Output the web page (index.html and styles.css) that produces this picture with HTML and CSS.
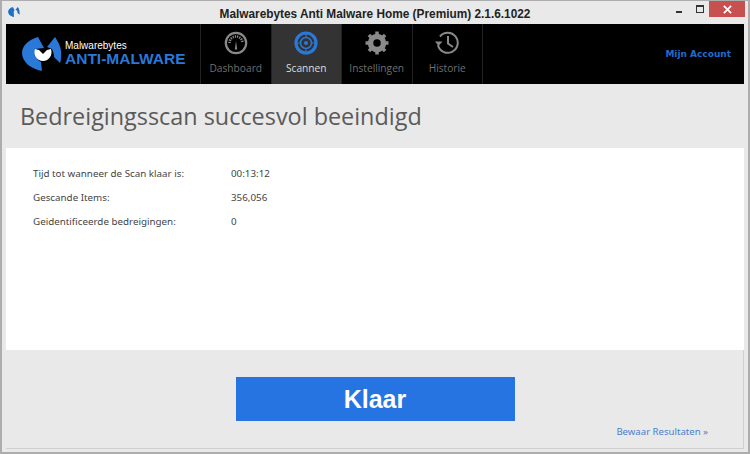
FILE: index.html
```html
<!DOCTYPE html>
<html lang="nl">
<head>
  <meta charset="UTF-8" />
  <meta name="viewport" content="width=device-width, initial-scale=1.0" />
  <title>Malwarebytes Anti Malware Home (Premium) 2.1.6.1022</title>
  <link rel="stylesheet" href="styles.css">
</head>
<body>
<div class="window">
  <div class="titlebar">
    <svg class="app-icon" width="12" height="10" viewBox="0 0 40 34">
      <path d="M16 0C6 3 0 9 0 16C0 25 9 32 20 34L19 15L22 11Z" fill="#1e6fc8"/>
      <path d="M33 0C37 6 40 12 39 26L32 20C32 17 31 14 30 12L25 9Z" fill="#1e6fc8"/>
    </svg>
    <div class="title">Malwarebytes Anti Malware Home (Premium) 2.1.6.1022</div>
    <div class="win-buttons">
      <span class="btn-min"></span>
      <span class="btn-max"></span>
      <span class="btn-close">
        <svg width="9" height="9" viewBox="0 0 10 10"><path d="M1 1L9 9M9 1L1 9" stroke="#fff" stroke-width="2"/></svg>
      </span>
    </div>
  </div>

  <div class="header">
    <div class="logo">
      <svg class="logo-mark" width="40" height="34" viewBox="0 0 40 34">
        <path d="M16 0C6 3 0 9 0 16C0 25 9 32 20 34L19 25C15 23 13 19 13 15L13 12L22 11Z" fill="#2a78d8"/>
        <path d="M33 0C37 6 40 12 39 19C39 21 39 24 38 26L32 20C32 17 31 14 30 12L25 10Z" fill="#2a78d8"/>
        <path d="M13 12L17 13L21 17L25 13L29 12C31 18 27 24 21 24C15 24 11 18 13 12Z" fill="#fff"/>
      </svg>
      <div class="logo-text">
        <div class="logo-top">Malwarebytes</div>
        <div class="logo-main">ANTI-MALWARE</div>
      </div>
    </div>
    <div class="nav">
      <div class="nav-item">
        <svg class="nav-icon" viewBox="0 0 24 24" width="24" height="24" fill="none">
          <circle cx="12" cy="12" r="10.2" stroke="#8a8a8a" stroke-width="2.200"/>
          <path d="M5.500 12A6.500 6.500 0 0 1 18.500 12" stroke="#8a8a8a" stroke-width="2.500" stroke-dasharray="1.200 1"/>
          <path d="M10.800 18.500L12 10L13.200 18.500Z" fill="#8a8a8a"/>
        </svg>
        <div class="nav-label">Dashboard</div>
      </div>
      <div class="nav-item active">
        <svg class="nav-icon" viewBox="0 0 24 24" width="24" height="24" fill="none">
          <circle cx="12" cy="12" r="10" stroke="#2a78d8" stroke-width="3.200"/>
          <circle cx="12" cy="12" r="5.500" stroke="#2a78d8" stroke-width="1.500"/>
          <circle cx="12" cy="12" r="2" fill="#2a78d8"/>
          <path d="M12 3V6M12 18V21M3 12H6M18 12H21" stroke="#2a78d8" stroke-width="1"/>
        </svg>
        <div class="nav-label">Scannen</div>
      </div>
      <div class="nav-item">
        <svg class="nav-icon" viewBox="0 0 24 24" width="24" height="24" fill="none">
          <circle cx="12" cy="12" r="6.500" stroke="#8a8a8a" stroke-width="5.500"/>
          <path d="M12 0.500V23.500M0.500 12H23.500M3.900 3.900L20.100 20.100M20.100 3.900L3.900 20.100" stroke="#8a8a8a" stroke-width="3.500" stroke-dasharray="3.500 16.500 3.500"/>
        </svg>
        <div class="nav-label">Instellingen</div>
      </div>
      <div class="nav-item">
        <svg class="nav-icon" viewBox="0 0 24 24" width="24" height="24" fill="none">
          <path d="M3 14A10 10 0 1 0 5 5.500" stroke="#8a8a8a" stroke-width="2"/>
          <path d="M0 10.500L3.500 15L7.500 10.500Z" fill="#8a8a8a"/>
          <path d="M13 5V12.500L18 16" stroke="#8a8a8a" stroke-width="2"/>
        </svg>
        <div class="nav-label">Historie</div>
      </div>
    </div>
    <div class="account">Mijn Account</div>
  </div>

  <h1 class="heading">Bedreigingsscan succesvol beeindigd</h1>

  <div class="results">
    <div class="row"><span class="row-label">Tijd tot wanneer de Scan klaar is:</span><span>00:13:12</span></div>
    <div class="row"><span class="row-label">Gescande Items:</span><span>356,056</span></div>
    <div class="row"><span class="row-label">Geidentificeerde bedreigingen:</span><span>0</span></div>
  </div>

  <div class="footer">
    <button class="done">Klaar</button>
    <a class="save">Bewaar Resultaten »</a>
  </div>
</div>
</body>
</html>
```

FILE: styles.css
```css
html, body {
  margin: 0;
  height: 100%;
}
body {
  font-family: 'Noto Sans', sans-serif;
  background: #e9e9e9;
  overflow: hidden;
}
.window {
  box-sizing: border-box;
  height: 454px;
  display: flex;
  flex-direction: column;
  padding: 0 4px 3px;
  border: 2px solid #adadad;
  border-top-width: 1px;
  background: #e9e9e9;
}
.titlebar {
  height: 23px;
  display: flex;
  align-items: center;
  justify-content: center;
  position: relative;
  margin: 0 -4px;
  flex-shrink: 0;
}
.app-icon {
  position: absolute;
  left: 6px;
  top: 6px;
}
.title {
  font-family: 'Liberation Sans', sans-serif;
  font-size: 11.850px;
  font-weight: bold;
  color: #222;
  padding-top: 2px;
}
.win-buttons {
  position: absolute;
  right: 3px;
  top: 0;
  display: flex;
  align-items: flex-start;
}
.btn-min {
  width: 6px;
  height: 2px;
  background: #333;
  margin: 10px 14px 0 0;
}
.btn-max {
  box-sizing: border-box;
  width: 8px;
  height: 8px;
  border: 1px solid #333;
  border-top-width: 2px;
  margin: 4px 5px 0 0;
}
.btn-close {
  width: 36px;
  height: 16px;
  background: #c75050;
  display: flex;
  align-items: center;
  justify-content: center;
}
.header {
  height: 60px;
  background: #000;
  display: flex;
  align-items: stretch;
  flex-shrink: 0;
}
.logo {
  width: 195px;
  display: flex;
  align-items: center;
  padding: 0 0 1px 16px;
  box-sizing: border-box;
  gap: 3px;
  border-right: 1px solid #222;
}
.logo-mark {
  display: block;
}
.logo-top {
  font-family: 'Liberation Sans', sans-serif;
  font-size: 10px;
  color: #fff;
  line-height: 10px;
}
.logo-main {
  font-family: 'Liberation Sans', sans-serif;
  font-size: 15.500px;
  font-weight: bold;
  color: #2a78d8;
  line-height: 16px;
}
.nav {
  display: flex;
}
.nav-item {
  width: 70.500px;
  border-right: 1px solid #222;
  display: flex;
  flex-direction: column;
  align-items: center;
  padding-top: 7px;
  box-sizing: border-box;
}
.nav-item.active {
  background: #333;
}
.nav-icon {
  display: block;
}
.nav-label {
  font-family: 'Open Sans', sans-serif;
  font-size: 10.200px;
  color: #6f6f6f;
  margin-top: 6px;
}
.active .nav-label {
  color: #ddd;
}
.account {
  margin-left: auto;
  align-self: center;
  font-family: 'DejaVu Sans', sans-serif;
  font-size: 9px;
  font-weight: bold;
  color: #1f6ccc;
  padding-right: 13px;
}
.heading {
  height: 64px;
  margin: 0;
  padding-left: 14px;
  display: flex;
  align-items: center;
  font-family: 'Open Sans', sans-serif;
  font-size: 23.400px;
  font-weight: 400;
  color: #5a5a5a;
  flex-shrink: 0;
}
.results {
  height: 202px;
  box-sizing: border-box;
  background: #fff;
  padding: 18px 27px;
  display: flex;
  flex-direction: column;
  gap: 8px;
  flex-shrink: 0;
}
.row {
  display: flex;
  font-family: 'Noto Sans', sans-serif;
  font-size: 9.800px;
  color: #444;
  line-height: 16px;
}
.row-label {
  width: 198px;
}
.footer {
  flex: 1;
  position: relative;
  display: flex;
  justify-content: center;
  align-items: flex-start;
  padding-top: 27px;
  border-right: 1px solid #cfcfcf;
  border-bottom: 1px solid #cfcfcf;
}
.done {
  width: 279px;
  height: 44px;
  margin-left: 1px;
  border: 0;
  background: #2574e2;
  color: #fff;
  font-family: 'Liberation Sans', sans-serif;
  font-size: 25px;
  font-weight: bold;
}
.save {
  position: absolute;
  right: 35px;
  bottom: 10px;
  font-family: 'Noto Sans', sans-serif;
  font-size: 9.600px;
  color: #4a80cf;
}
```
